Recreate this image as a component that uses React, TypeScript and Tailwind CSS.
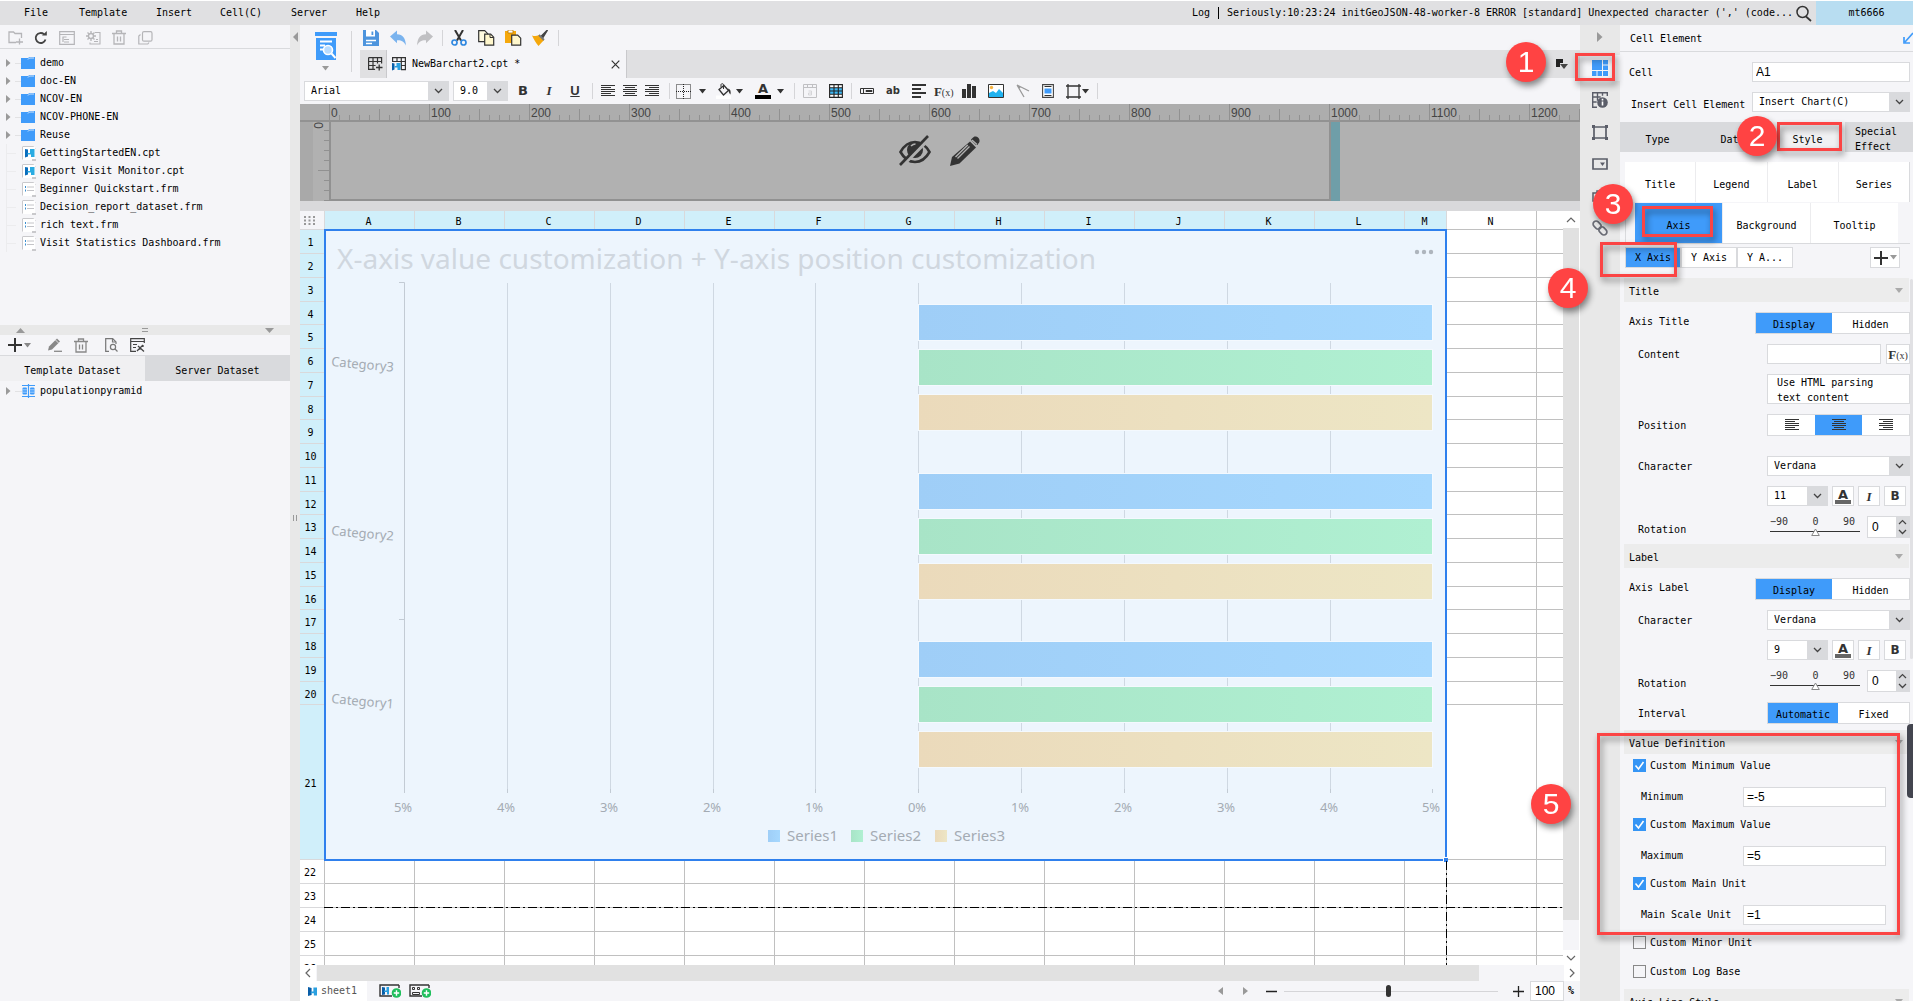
import React from "react";

const MONO = "font-['DejaVu_Sans_Mono','Liberation_Mono',monospace]";
const ARIAL = "font-['Liberation_Sans',sans-serif]";

function Ico({ w = 16, h = 16, children, className = "" }: { w?: number; h?: number; children: React.ReactNode; className?: string }) {
  return (
    <svg width={w} height={h} viewBox={`0 0 ${w} ${h}`} fill="none" className={`shrink-0 ${className}`} aria-hidden="true">
      {children}
    </svg>
  );
}

function IconButton({ label, className = "", children }: { label: string; className?: string; children: React.ReactNode }) {
  return (
    <button type="button" aria-label={label} className={`flex shrink-0 items-center justify-center ${className}`}>
      {children}
    </button>
  );
}

const Chevron = () => (
  <Ico w={9} h={6}>
    <path d="M1 1l3.500 3.500L8 1" stroke="#444" strokeWidth="1.300" />
  </Ico>
);

const Caret = ({ color = "#333" }: { color?: string }) => (
  <Ico w={7} h={5}>
    <path d="M0 0h7L3.500 4.500z" fill={color} />
  </Ico>
);

const Sep = ({ className = "h-4" }: { className?: string }) => <div className={`w-px shrink-0 bg-[#d5d5d8] ${className}`} />;

function Select({ label, value, options, className = "" }: { label: string; value: string; options: string[]; className?: string }) {
  return (
    <div className={`relative flex h-5 shrink-0 border border-[#d9dadd] bg-white ${className}`}>
      <select aria-label={label} defaultValue={value} className="w-full appearance-none bg-transparent pl-1.5 text-[10px] leading-[18px] outline-none">
        {options.map((o) => (
          <option key={o}>{o}</option>
        ))}
      </select>
      <div className="pointer-events-none absolute inset-y-0 right-0 flex w-5 items-center justify-center bg-[#d9dadd]">
        <Chevron />
      </div>
    </div>
  );
}

/* ---------- shared drawings ---------- */

const ReportGlyph = ({ w = 10, h = 10 }: { w?: number; h?: number }) => (
  <svg width={w} height={h} viewBox="0 0 10 10" className="shrink-0" aria-hidden="true">
    <path d="M0 0l4 1v8l-4 1z" fill="#0a5ea8" />
    <path d="M3 5h3v-4.500h4V9.500H6.500V7H3z" fill="#2aa0e0" />
  </svg>
);

const TrashIcon = ({ color }: { color: string }) => (
  <Ico w={14} h={15}>
    <path d="M0 3.500h14M4.500 3V1h5v2M2 4v10h10V4M5.500 6.500v5M8.500 6.500v5" stroke={color} strokeWidth="1.300" />
  </Ico>
);

const AlignIcon = ({ kind, color = "#333" }: { kind: "left" | "center" | "right"; color?: string }) => {
  const short = kind === "left" ? "M0 2.500h10M0 8.500h10" : kind === "center" ? "M2 2.500h10M2 8.500h10" : "M4 2.500h10M4 8.500h10";
  return (
    <Ico w={14} h={12}>
      <path d={`M0 .5h14M0 4.500h14M0 6.500h14M0 10.500h14 ${short}`} stroke={color} />
    </Ico>
  );
};

const FxIcon = () => (
  <span className="font-['Liberation_Serif',serif] text-[13px] leading-none font-bold text-[#333]">
    F<span className="text-[10px] font-normal">(x)</span>
  </span>
);

/* ---------- menu bar ---------- */

const MENUS: [string, string][] = [
  ["File", "w-[55px]"],
  ["Template", "w-[77px]"],
  ["Insert", "w-[64px]"],
  ["Cell(C)", "w-[71px]"],
  ["Server", "w-[65px]"],
  ["Help", "w-[40px]"],
];

function MenuBar() {
  return (
    <header className="flex h-[25px] shrink-0 items-stretch border-t border-white bg-[#e0e0e2]">
      <nav className="flex items-center pl-6">
        {MENUS.map(([m, w]) => (
          <button key={m} type="button" className={`${w} text-left`}>
            {m}
          </button>
        ))}
      </nav>
      <div className="ml-auto flex items-center">
        <button type="button">Log</button>
        <div className="mx-2 h-3 w-px bg-black" />
        <span className="whitespace-nowrap">Seriously:10:23:24 initGeoJSON-48-worker-8 ERROR [standard] Unexpected character (&#39;,&#39; (code...</span>
        <IconButton label="Search" className="mr-1 ml-0.5">
          <Ico w={17} h={17}>
            <circle cx="7.500" cy="7" r="5.500" stroke="#333" strokeWidth="1.500" />
            <path d="M11 11.500l5 4.500" stroke="#333" strokeWidth="1.700" />
          </Ico>
        </IconButton>
        <button type="button" className="h-full w-[97px] bg-[#b8ddf1] pl-1">
          mt6666
        </button>
      </div>
    </header>
  );
}

/* ---------- left column ---------- */

const FOLDERS = ["demo", "doc-EN", "NCOV-EN", "NCOV-PHONE-EN", "Reuse"];
const FILES = ["GettingStartedEN.cpt", "Report Visit Monitor.cpt", "Beginner Quickstart.frm", "Decision_report_dataset.frm", "rich text.frm", "Visit Statistics Dashboard.frm"];

const Expander = () => (
  <Ico w={5} h={8}>
    <path d="M0 0v8l4.500-4z" fill="#9a9a9a" />
  </Ico>
);

function FileIcon({ report }: { report: boolean }) {
  return (
    <Ico w={14} h={15}>
      <path d="M.5 1v12.500M.5 .5h11l2 2" stroke="#c9c9cc" />
      <path d="M1 1h12v13H1z" fill="#fff" />
      <path d="M10 13h4v2h-4z" fill="#c9c9cc" />
      {report ? (
        <>
          <path d="M3 3l3 .5v7L3 11.500z" fill="#0a6ebd" />
          <path d="M5.500 7H8V3h4.500v8H9V8.500H5.500z" fill="#29abe2" />
        </>
      ) : (
        <>
          <path d="M3.500 4v2M3.500 7.500v2" stroke="#3a8fd0" />
          <path d="M5 5h7M5 8.500h7" stroke="#c4c4c8" />
        </>
      )}
    </Ico>
  );
}

function LeftColumn() {
  return (
    <aside className="flex w-[290px] shrink-0 flex-col bg-[#f5f5f8]">
      <div className="flex h-6 shrink-0 items-center border-b border-[#d9dadd] pt-0.5 pl-2">
        <IconButton label="New folder" className="w-[26px] !justify-start">
          <Ico w={16} h={14}>
            <path d="M13.500 7V2.500H7L5.500 1H1v10.500h7" stroke="#b5b5b8" strokeWidth="1.300" />
            <path d="M8 11h7M11.500 7.500v6" stroke="#b5b5b8" strokeWidth="1.300" />
          </Ico>
        </IconButton>
        <IconButton label="Refresh" className="w-[25px] !justify-start">
          <Ico w={14} h={14}>
            <path d="M11.500 8.500A5 5 0 1 1 10 3.200" stroke="#444" strokeWidth="1.800" />
            <path d="M8 4.500h4.800V0z" fill="#444" />
          </Ico>
        </IconButton>
        <IconButton label="Templates" className="w-[27px] !justify-start">
          <Ico w={16} h={14}>
            <path d="M.7.700h14.600v12.600H.7zM.7 3.500h14.600M3.500 6h4M5 8.500h5M5 11h5M4 6v5" stroke="#b5b5b8" strokeWidth="1.200" />
          </Ico>
        </IconButton>
        <IconButton label="Template settings" className="w-[26px] !justify-start">
          <Ico w={15} h={14}>
            <circle cx="5" cy="5" r="2.500" stroke="#b5b5b8" strokeWidth="1.400" />
            <path d="M5 0v2M5 8v2M0 5h2M8 5h2M1.500 1.500l1.300 1.300M7.200 7.200l1.300 1.300M1.500 8.500l1.300-1.300M8.500 1.500L7.200 2.800" stroke="#b5b5b8" strokeWidth="1.300" />
            <path d="M9 1.500h5V13H4v-1.500M8 10.500h4M10 8.500h2" stroke="#b5b5b8" strokeWidth="1.100" />
          </Ico>
        </IconButton>
        <IconButton label="Delete" className="w-[26px] !justify-start">
          <TrashIcon color="#b5b5b8" />
        </IconButton>
        <IconButton label="Copy" className="!justify-start">
          <Ico w={15} h={14}>
            <rect x="4.500" y=".7" width="9.500" height="9.500" rx="1.500" stroke="#b5b5b8" strokeWidth="1.200" />
            <path d="M2.500 3.500L.8 5v8h9l1.200-1.500" stroke="#b5b5b8" strokeWidth="1.200" />
          </Ico>
        </IconButton>
      </div>

      <ul className="flex h-[276px] shrink-0 flex-col overflow-hidden pt-[5px]">
        {FOLDERS.map((f) => (
          <li key={f} className="flex h-[18px] items-center pl-1.5">
            <Expander />
            <div className="ml-1 h-px w-1.5 bg-[#e2e2e4]" />
            <Ico w={14} h={12}>
              <path d="M0 1h7l1.500-1H14v12H0z" fill="#3f9bfa" />
              <path d="M7 2.500L8.500 1H13" stroke="#f5f5f8" strokeWidth=".8" />
            </Ico>
            <span className="ml-[5px]">{f}</span>
          </li>
        ))}
        {FILES.map((f) => (
          <li key={f} className="flex h-[18px] items-center pl-1.5">
            <div className="h-full w-px bg-[#ececee]" />
            <div className="h-px w-[9px] bg-[#ececee]" />
            <div className="w-1.5" />
            <FileIcon report={f.endsWith("cpt")} />
            <span className="ml-1">{f}</span>
          </li>
        ))}
      </ul>

      <div className="flex h-2.5 shrink-0 items-center justify-between bg-[#e8e8e8] px-4">
        <Ico w={9} h={5}>
          <path d="M0 5h9L4.500 0z" fill="#999" />
        </Ico>
        <Ico w={6} h={4}>
          <path d="M0 .5h6M0 3.500h6" stroke="#999" />
        </Ico>
        <Ico w={9} h={5}>
          <path d="M0 0h9L4.500 5z" fill="#999" />
        </Ico>
      </div>

      <div className="flex h-[21px] shrink-0 items-center border-b border-[#d9dadd] pl-2">
        <IconButton label="Add dataset" className="gap-0.5">
          <Ico w={14} h={14}>
            <path d="M0 7h14M7 0v14" stroke="#333" strokeWidth="2" />
          </Ico>
          <Caret color="#888" />
        </IconButton>
        <Sep className="mr-2 ml-2" />
        <IconButton label="Edit dataset" className="w-[26px] !justify-start">
          <Ico w={14} h={14}>
            <path d="M0 12.500l1-4L9 .5l3 3L4 11.500z" fill="#888" />
            <path d="M7.500 2l3 3" stroke="#f5f5f8" strokeWidth=".8" />
            <path d="M6 13.300h8" stroke="#888" strokeWidth="1.300" />
          </Ico>
        </IconButton>
        <IconButton label="Delete dataset">
          <TrashIcon color="#888" />
        </IconButton>
        <Sep className="mr-2 ml-2" />
        <IconButton label="Preview dataset" className="w-[25px] !justify-start">
          <Ico w={13} h={14}>
            <path d="M4 13.300H.7V.7h7L11 4v2" stroke="#777" strokeWidth="1.200" />
            <circle cx="8" cy="9" r="2.600" stroke="#777" strokeWidth="1.200" />
            <path d="M10 11l2.500 2.500M7.500 1v3h3" stroke="#777" strokeWidth="1.200" />
          </Ico>
        </IconButton>
        <IconButton label="Dataset settings">
          <Ico w={15} h={14}>
            <path d="M6 13.300H.7V.7h13.600V5M.7 3.500h13.600M3 6.500h4M3 9.500h3" stroke="#444" strokeWidth="1.200" />
            <path d="M7 13l6-6M8 8l6 5.500M13 7v2M8.500 11h2" stroke="#444" strokeWidth="1.300" />
          </Ico>
        </IconButton>
      </div>

      <div className="flex h-[25px] shrink-0">
        <button type="button" className="flex-1 bg-[#f0f0f2] pt-1">Template Dataset</button>
        <button type="button" className="flex-1 bg-[#d9dadd] pt-1">Server Dataset</button>
      </div>
      <div className="flex h-[18px] items-center pt-0.5 pl-1.5">
        <Expander />
        <div className="ml-1 h-px w-[7px] bg-[#e2e2e4]" />
        <Ico w={13} h={14}>
          <path d="M0 1.500h13M0 12.500h13M6.500 0v14" stroke="#3f9bfa" strokeWidth="1.200" />
          <rect x=".5" y="3.500" width="4.500" height="7" rx="1" fill="#3f9bfa" />
          <rect x="8" y="3.500" width="4.500" height="7" rx="1" fill="#3f9bfa" />
          <path d="M.5 5.800H5M.5 8.200H5M8 5.800h4.500M8 8.200h4.500" stroke="#cfe5ff" strokeWidth=".7" />
        </Ico>
        <span className="ml-[5px]">populationpyramid</span>
      </div>
    </aside>
  );
}

/* ---------- top tool bars ---------- */

function TopTools() {
  return (
    <div className="flex h-[53px] shrink-0 bg-[#f5f5f8]">
      <div className="flex w-[51px] shrink-0 flex-col items-center pt-[7px]">
        <IconButton label="Preview" className="flex-col gap-1.5">
          <Ico w={22} h={28}>
            <path d="M0 0h22v4H0zM1 6h20v22H1z" fill="#3f9bfa" />
            <path d="M5 9.500h12M5 13.500h5M5 17.500h3" stroke="#fff" strokeWidth="2" />
            <circle cx="13" cy="18" r="4.500" fill="#b9dcff" stroke="#fff" strokeWidth="1.600" />
            <path d="M16.500 21.500l4 4.500" stroke="#fff" strokeWidth="2" />
          </Ico>
          <Caret color="#999" />
        </IconButton>
      </div>
      <Sep className="mt-1.5 h-[41px]" />
      <div className="flex min-w-0 flex-1 flex-col">
        <div className="flex h-[25px] shrink-0 items-center pl-[11px]">
          <IconButton label="Save" className="w-[27px] !justify-start">
            <Ico>
              <path d="M0 0h13l3 3v13H0z" fill="#4d94dd" />
              <path d="M3 0h9v6.500H3z" fill="#fff" />
              <path d="M8.500 1.500h1.800v3.500H8.500z" fill="#4d94dd" />
              <path d="M3 10.500h10M3 13.500h6" stroke="#fff" strokeWidth="1.400" />
            </Ico>
          </IconButton>
          <IconButton label="Undo" className="w-[27px] !justify-start">
            <Ico>
              <path d="M0 6.500L7 .5v3.700c6 .3 8.500 4 9 11.300-2-4-4.500-5.500-9-5.300v3z" fill="#7ab3ee" />
            </Ico>
          </IconButton>
          <IconButton label="Redo" className="w-[25px] !justify-start">
            <Ico>
              <path d="M16 6.500L9 .5v3.700C3 4.500.5 8.200 0 15.500c2-4 4.500-5.500 9-5.300v3z" fill="#c0c0c3" />
            </Ico>
          </IconButton>
          <Sep />
          <IconButton label="Cut" className="ml-2 w-[27px] !justify-start">
            <Ico>
              <path d="M4 0l6 10.500M12 0L6 10.500" stroke="#333" strokeWidth="2" />
              <circle cx="3.500" cy="12.500" r="2.500" stroke="#3088e0" strokeWidth="1.700" />
              <circle cx="12.500" cy="12.500" r="2.500" stroke="#3088e0" strokeWidth="1.700" />
            </Ico>
          </IconButton>
          <IconButton label="Copy" className="w-[27px] !justify-start">
            <Ico w={17}>
              <path d="M.7.700h6l3 3v8h-9z" fill="#fffbe0" stroke="#333" strokeWidth="1.200" />
              <path d="M6.700 4.200h6l3 3v8h-9z" fill="#fff7cc" stroke="#333" strokeWidth="1.200" />
              <path d="M12 4.500v3h3.500" stroke="#333" />
            </Ico>
          </IconButton>
          <IconButton label="Paste" className="w-[27px] !justify-start">
            <Ico w={17}>
              <path d="M0 1h11v12H0z" fill="#f5a80c" />
              <path d="M3 0h5v3H3z" fill="#fff" stroke="#b87800" strokeWidth=".8" />
              <path d="M6.700 5.200h6l3 3v7h-9z" fill="#fff7cc" stroke="#333" strokeWidth="1.200" />
            </Ico>
          </IconButton>
          <IconButton label="Format painter" className="mr-2.5 !justify-start">
            <Ico>
              <path d="M15.500 0L9 6.500l1.500 1.500z" fill="#444" stroke="#444" strokeWidth="1.500" />
              <path d="M0 5.500c3 1 5 .5 7-.5l5 5c-2 2-3 3.500-5.500 6C4 13 2 9.500 0 5.500z" fill="#f5a80c" />
              <path d="M7 5l5 5" stroke="#777" strokeWidth="1.800" />
            </Ico>
          </IconButton>
          <Sep />
        </div>
        <div className="ml-2 flex h-7 shrink-0 bg-[#e0e0e2]">
          <IconButton label="New sheet" className="w-[27px] border-r border-[#c9c9cc] pl-1">
            <Ico w={15} h={14}>
              <path d="M.6.600h13v6M.6.600v11.800h6.500M.6 4.500h13M.6 8.500h7M5 .6v11.800M9.500.600v6" stroke="#333" strokeWidth="1.200" />
              <path d="M8 10.500h6.500M11.200 7.500v6" stroke="#333" strokeWidth="1.300" />
            </Ico>
          </IconButton>
          <div className="flex w-[240px] items-center border-r border-[#c9c9cc] bg-[#f5f5f8] pl-[5px]">
            <Ico w={14} h={14}>
              <path d="M.6 5V.6h12.800v12H9M.6 4.500h12.800M9 8.500h4.500M5 .6V5M9.300.600v12" stroke="#333" strokeWidth="1.200" />
              <path d="M0 6l2.500.500v6L0 13.500z" fill="#0a5ea8" />
              <path d="M2.500 9H4.500V6h4v7H5.500v-2.500h-3z" fill="#2aa0e0" />
            </Ico>
            <span className="ml-1.5">NewBarchart2.cpt *</span>
            <IconButton label="Close" className="mr-1.5 ml-auto">
              <Ico w={9} h={9}>
                <path d="M.7.700l7.600 7.600M8.300.700L.7 8.300" stroke="#333" strokeWidth="1.200" />
              </Ico>
            </IconButton>
          </div>
          <IconButton label="Tab list" className="mr-3 ml-auto">
            <Ico w={12} h={11}>
              <path d="M0 0h7v4H4v4H0z" fill="#222" />
              <path d="M4 5h8L8 10z" fill="#444" />
            </Ico>
          </IconButton>
        </div>
      </div>
    </div>
  );
}

function FormatBar() {
  return (
    <div className="flex h-[26px] shrink-0 items-center bg-[#f5f5f8] pl-1">
      <Select label="Font family" value="Arial" options={["Arial", "Verdana"]} className="w-[145px]" />
      <Select label="Font size" value="9.0" options={["9.0", "10.0", "11.0"]} className="ml-1 w-[55px]" />
      <div className="ml-0.5 flex items-center text-[13px] text-[#333]">
        <button type="button" aria-label="Bold" className="w-[26px] font-['DejaVu_Sans',sans-serif] font-bold">B</button>
        <button type="button" aria-label="Italic" className="w-[26px] font-['Liberation_Serif',serif] font-bold italic">I</button>
        <button type="button" aria-label="Underline" className="w-[26px] font-['Liberation_Sans',sans-serif] font-bold underline">U</button>
      </div>
      <Sep className="ml-1 h-4" />
      <div className="ml-2 flex gap-2">
        <IconButton label="Align left"><AlignIcon kind="left" /></IconButton>
        <IconButton label="Align center"><AlignIcon kind="center" /></IconButton>
        <IconButton label="Align right"><AlignIcon kind="right" /></IconButton>
      </div>
      <Sep className="mr-1.5 ml-2.5 h-4" />
      <IconButton label="Borders" className="w-10 gap-2 !justify-start">
        <Ico w={15} h={15}>
          <path d="M.5.500h14v14H.5zM7.500 0v15M0 7.500h15" stroke="#222" strokeDasharray="1 1" />
        </Ico>
        <Caret />
      </IconButton>
      <IconButton label="Fill colour" className="w-[39px] gap-1 !justify-start">
        <Ico w={16} h={16}>
          <path d="M0 12.500h15V16H0z" fill="#fff" />
          <path d="M3 6.500l5-4 4.500 5-5 4.500z" stroke="#333" strokeWidth="1.300" />
          <path d="M5 4V1.500C5 .5 7.500.500 7.500 1.500V6" stroke="#333" />
          <path d="M12 5.500c2.500.5 3 2.500 2.500 6-1-1-2-2.500-2.500-6z" fill="#333" />
        </Ico>
        <Caret />
      </IconButton>
      <IconButton label="Text colour" className="w-[39px] gap-1.5 !justify-start">
        <span className="flex w-4 flex-col items-center border-b-4 border-black font-['DejaVu_Sans',sans-serif] text-[13px] leading-[12px] font-bold text-[#333]">A</span>
        <Caret />
      </IconButton>
      <Sep className="mr-2 h-4" />
      <IconButton label="Merge cells" className="w-[26px] !justify-start">
        <Ico w={14} h={14}>
          <path d="M.5.500h13v13H.5zM.5 3.500h13M4.500.500v3M9.500.500v3" stroke="#c0c0c3" />
          <path d="M5.500 7h3v4h-3V9h3" stroke="#d5d5d8" />
        </Ico>
      </IconButton>
      <IconButton label="Conditional grid" className="mr-2">
        <Ico w={14} h={14}>
          <path d="M.5.500h13v13H.5z" fill="#fff" />
          <path d="M1 4h12v6H1z" fill="#3fb8f5" />
          <path d="M.6.600h12.800v12.800H.6zM.6 3.800h12.800M.6 7h12.800M.6 10.200h12.800M5 .6v12.800M9.300.600v12.800" stroke="#222" strokeWidth="1.100" />
        </Ico>
      </IconButton>
      <Sep className="mr-2 h-4" />
      <div className="flex items-center gap-3">
        <IconButton label="Text field">
          <Ico w={14} h={6}>
            <path d="M.5.500h13v5H.5zM3.500 1v4M6 2.500h6v1H6z" stroke="#333" />
          </Ico>
        </IconButton>
        <IconButton label="Plain text"><span className="font-['DejaVu_Sans',sans-serif] text-[10px] font-bold text-[#333]">ab</span></IconButton>
        <IconButton label="Rich text">
          <Ico w={14} h={14}>
            <path d="M0 1h14M0 5h9M0 9h14M0 13h9" stroke="#333" strokeWidth="1.800" />
          </Ico>
        </IconButton>
        <IconButton label="Formula" className="-mx-1"><FxIcon /></IconButton>
        <IconButton label="Chart">
          <Ico w={14} h={14}>
            <path d="M0 5h4v9H0zM5 0h4v14H5zM10 2h4v12h-4z" fill="#333" />
          </Ico>
        </IconButton>
        <IconButton label="Image">
          <Ico w={16} h={14}>
            <path d="M.5.500h15v13H.5z" fill="#fff" stroke="#333" />
            <path d="M1 13V9l4-2 3 2 3-4 4 4v4z" fill="#1fb2f0" />
            <circle cx="3.500" cy="3.500" r="1.700" fill="#f5b342" />
          </Ico>
        </IconButton>
        <IconButton label="Slope line">
          <Ico w={14} h={14}>
            <path d="M1 1l12 6M1 1l7 12M1 1l3 3" stroke="#999" strokeWidth="1.300" />
          </Ico>
        </IconButton>
        <IconButton label="Sub report">
          <Ico w={12} h={14}>
            <path d="M.6.600h10.800v12.800H.6z" fill="#fff" stroke="#444" strokeWidth="1.100" />
            <path d="M2.500 2.500h7M2.500 11.500h7" stroke="#333" />
            <path d="M2.500 4.500h7v5h-7z" fill="#3f9bfa" />
          </Ico>
        </IconButton>
        <IconButton label="Widget" className="gap-px">
          <Ico w={15} h={15}>
            <path d="M2 0v15M13 0v15M0 2h15M0 13h15" stroke="#333" strokeWidth="1.300" />
          </Ico>
          <Caret />
        </IconButton>
      </div>
      <Sep className="ml-2 h-4" />
    </div>
  );
}

/* ---------- ruler and hidden parameter panel ---------- */

const RULER = [0, 100, 200, 300, 400, 500, 600, 700, 800, 900, 1000, 1100, 1200];

function ParameterPanel() {
  return (
    <div className="flex h-[97px] shrink-0 flex-col bg-[#b1b1b1]">
      <div className="flex h-[18px] shrink-0 overflow-hidden border-b-2 border-[#929292] bg-[#adadad]">
        <div className="w-[29px] shrink-0" />
        {RULER.map((n) => (
          <div key={n} className="relative w-[100px] shrink-0">
            <svg width="100" height="16" viewBox="0 0 100 16" className="absolute inset-0" aria-hidden="true">
              <path
                d="M.5 0v16M50.500 5v11M10.500 11v5M20.500 11v5M30.500 11v5M40.500 11v5M60.500 11v5M70.500 11v5M80.500 11v5M90.500 11v5"
                stroke="#919191"
              />
            </svg>
            <span className={`relative pl-0.5 text-[12px] leading-[18px] text-[#444] ${ARIAL}`}>{n}</span>
          </div>
        ))}
      </div>
      <div className="flex min-h-0 flex-1">
        <div className="w-[13px] shrink-0 bg-[#a9a9a9]" />
        <div className="relative w-4 shrink-0">
          <svg width="16" height="79" viewBox="0 0 16 79" className="absolute inset-0" aria-hidden="true">
            <path d="M11 8.500h5M11 18.500h5M11 28.500h5M11 38.500h5M5 48.500h11M11 58.500h5M11 68.500h5M11 78.500h5" stroke="#919191" />
          </svg>
          <span className={`block size-3 rotate-270 text-right text-[12px] leading-3 text-[#444] ${ARIAL}`}>0</span>
        </div>
        <div className="flex w-[1002px] shrink-0 items-center border-r-2 border-b-2 border-l-2 border-[#919191]">
          <div className="ml-[568px] flex items-center gap-[19px] pb-5">
            <IconButton label="Hide panel">
              <Ico w={32} h={31}>
                <path d="M1.500 17C6 9 11 7 16 7s10 2 14.500 10C26 25 21 27 16 27S6 25 1.500 17z" stroke="#333" strokeWidth="2.600" />
                <circle cx="16" cy="15" r="8" fill="#333" />
                <path d="M12 11c1.500-1.500 3-2 4.500-2" stroke="#b1b1b1" strokeWidth="1.500" />
                <path d="M3 31L32 2" stroke="#b1b1b1" strokeWidth="3.500" />
                <path d="M1 30L29 1" stroke="#333" strokeWidth="2.600" />
              </Ico>
            </IconButton>
            <IconButton label="Edit panel">
              <Ico w={30} h={30}>
                <path d="M21.500 4.500l4.500 4.500 1.500 0 .8-1.500C31 5 29 1 26 .5c-1.500-.3-2.500.3-3.500 1.500L21 3.500z" fill="#333" />
                <path d="M22 4l5 4.500" stroke="#b1b1b1" strokeWidth="1.200" />
                <path d="M20 5.500l6 6L9.500 27.500 0 30l2-9z" fill="#333" />
                <path d="M19.500 10.500L7.500 22.500M17.800 9L5.500 21" stroke="#b1b1b1" strokeWidth="1.400" />
              </Ico>
            </IconButton>
          </div>
        </div>
        <div className="w-[9px] shrink-0 bg-[#6f9ea8]" />
      </div>
    </div>
  );
}

/* ---------- chart ---------- */

const AXIS_X = [78, 181, 284, 387, 489, 592, 695, 798, 901, 1004, 1106];
const AXIS_LABELS = ["5%", "4%", "3%", "2%", "1%", "0%", "1%", "2%", "3%", "4%", "5%"];
const GROUP_Y = [74, 243, 411];
const CATEGORIES = ["Category3", "Category2", "Category1"];
const SERIES = [
  ["Series1", "url(#blue)"],
  ["Series2", "url(#green)"],
  ["Series3", "url(#sand)"],
];
const LEGEND_X = [442, 525, 609];

function Chart() {
  return (
    <svg viewBox="0 0 1119 628" width="1119" height="628" className="block font-['Noto_Sans',sans-serif]" role="img" aria-label="Grouped bar chart">
      <defs>
        <linearGradient id="blue"><stop offset="0" stopColor="#9fcef7" /><stop offset="1" stopColor="#a6d8fe" /></linearGradient>
        <linearGradient id="green"><stop offset="0" stopColor="#a8e4c7" /><stop offset="1" stopColor="#b0f0d2" /></linearGradient>
        <linearGradient id="sand"><stop offset="0" stopColor="#ebdabb" /><stop offset="1" stopColor="#ede6c5" /></linearGradient>
      </defs>
      <text x="11" y="38" fontSize="28" fill="#d0d7df">X-axis value customization + Y-axis position customization</text>
      {[1091, 1098, 1105].map((x) => (
        <circle key={x} cx={x} cy="21" r="2.200" fill="#aeb5bd" />
      ))}
      {AXIS_X.slice(0, 10).map((x) => (
        <path key={x} d={`M${x + 0.5} 52V558`} stroke="#cfd8e2" />
      ))}
      {AXIS_X.map((x) => (
        <path key={x} d={`M${x + 0.5} 558v4`} stroke="#c3cbd4" />
      ))}
      <path d="M73 51.500h5.500V562M73 388.500h5" stroke="#c3cbd4" fill="none" />
      {GROUP_Y.map((y, g) => (
        <g key={y}>
          {SERIES.map(([name, fill], i) => (
            <rect key={name} x="592.500" y={y + i * 45 - 0.5} width="514" height="36" fill={fill} stroke="#f4f9fe" />
          ))}
          <text x="68" y={y + 64} fontSize="13" fill="#a4abb3" textAnchor="end" transform={`rotate(5 38 ${y + 60})`}>{CATEGORIES[g]}</text>
        </g>
      ))}
      {AXIS_X.map((x, i) => (
        <text key={x} x={x - 1} y="581" fontSize="13" fill="#a4abb3" textAnchor="middle">{AXIS_LABELS[i]}</text>
      ))}
      {SERIES.map(([name, fill], i) => (
        <g key={name}>
          <rect x={LEGEND_X[i]} y="599" width="12" height="12" fill={fill} />
          <text x={LEGEND_X[i] + 19} y="610" fontSize="15" fill="#a4abb3">{name}</text>
        </g>
      ))}
    </svg>
  );
}

/* ---------- spreadsheet ---------- */

const COLS = ["A", "B", "C", "D", "E", "F", "G", "H", "I", "J", "K", "L", "M", "N", ""];
const rowHeight = (r: number) => (r === 21 ? "h-[155px]" : r > 21 ? "h-6" : r % 4 === 0 ? "h-[23px]" : "h-6");
const ROWS = Array.from({ length: 26 }, (_, i) => i + 1);

const ScrollArrow = ({ d, label, className }: { d: string; label: string; className: string }) => (
  <IconButton label={label} className={`bg-white ${className}`}>
    <Ico w={10} h={10}>
      <path d={d} stroke="#666" strokeWidth="1.200" />
    </Ico>
  </IconButton>
);

function Sheet() {
  return (
    <div className="flex min-h-0 flex-1">
      <div className="relative min-w-0 flex-1 overflow-hidden bg-white">
        <table className="w-[1327px] table-fixed border-separate border-spacing-0">
          <colgroup>
            <col className="w-[25px]" />
            {COLS.map((c, i) => (
              <col key={i} className={c === "M" ? "w-[42px]" : "w-[90px]"} />
            ))}
          </colgroup>
          <thead>
            <tr className="h-[19px]">
              <th className="border-r border-b border-[#d9d9db] bg-[#f5f5f8] p-0">
                <Ico w={11} h={9} className="mr-auto ml-1">
                  <path d="M0 1h2M4.500 1h2M9 1h2M0 4.500h2M4.500 4.500h2M9 4.500h2M0 8h2M4.500 8h2M9 8h2" stroke="#999" strokeWidth="2" />
                </Ico>
              </th>
              {COLS.map((c, i) => (
                <th key={i} scope="col" className={`border-r border-b p-0 pt-1 pr-0.5 font-normal ${i < 13 ? "border-[#d9d9db] bg-[#d0effa]" : "border-[#c0c0c0] bg-white"}`}>
                  {c}
                </th>
              ))}
            </tr>
          </thead>
          <tbody>
            {ROWS.map((r) => (
              <tr key={r} className={rowHeight(r)}>
                <th scope="row" className={`border-b border-[#d9d9db] p-0 pt-[3px] pr-1 font-normal ${r < 22 ? "bg-[#d0effa]" : "border-r border-r-[#c0c0c0] bg-white"}`}>
                  {r}
                </th>
                {COLS.map((c, i) => (
                  <td key={i} className="border-r border-b border-[#c0c0c0] p-0" />
                ))}
              </tr>
            ))}
          </tbody>
        </table>
        <div className="absolute top-[18px] left-6 border-2 border-[#2f80ed] bg-[#edf5fd]">
          <Chart />
          <div className="absolute -right-[3px] -bottom-[3px] size-[5px] border-t border-l border-white bg-[#2f80ed]" />
        </div>
        <svg className="pointer-events-none absolute top-[650px] left-[1146px]" width="1" height="106" aria-hidden="true">
          <path d="M.5 0v106" stroke="#000" strokeDasharray="9 3 2 3" />
        </svg>
        <svg className="pointer-events-none absolute top-[696px] left-6 w-full" height="1" aria-hidden="true">
          <path d="M0 .5h3000" stroke="#000" strokeDasharray="9 3 2 3" />
        </svg>
      </div>
      <div className="flex w-[17px] shrink-0 flex-col border-r border-white bg-[#f5f5f8]">
        <ScrollArrow label="Scroll up" d="M1 7l4-4 4 4" className="h-[17px]" />
        <div className="h-[692px] bg-[#e1e1e1]" />
        <ScrollArrow label="Scroll down" d="M1 3l4 4 4-4" className="mt-auto h-[15px]" />
      </div>
    </div>
  );
}

function BottomBar() {
  return (
    <>
      <div className="flex h-4 shrink-0 bg-[#f5f5f8]">
        <ScrollArrow label="Scroll left" d="M7 1L3 5l4 4" className="w-4" />
        <div className="ml-px h-full w-[1162px] bg-[#e1e1e1]" />
        <ScrollArrow label="Scroll right" d="M3 1l4 4-4 4" className="ml-auto w-4" />
      </div>
      <div className="flex h-5 shrink-0 items-center bg-[#f5f5f8]">
        <button type="button" className="flex h-full w-[67px] items-center gap-1 bg-white pl-2 text-[#555]">
          <ReportGlyph w={9} h={9} />
          sheet1
        </button>
        <IconButton label="Add report sheet" className="ml-3">
          <Ico w={22} h={14}>
            <path d="M20 1H1v11h12M20 1v3" stroke="#333" strokeWidth="1.400" />
            <path d="M3 3l3 .5v7L3 11z" fill="#0a5ea8" />
            <path d="M5 6.500h2.500V3H10v7.500H8V8H5z" fill="#2aa0e0" />
            <circle cx="17.500" cy="9" r="4.800" fill="#1fbf5c" />
            <path d="M14.800 9h5.400M17.500 6.300v5.400" stroke="#fff" strokeWidth="1.400" />
          </Ico>
        </IconButton>
        <IconButton label="Add form sheet" className="ml-2">
          <Ico w={22} h={14}>
            <path d="M20 1H1v11h12M20 1v3" stroke="#333" strokeWidth="1.400" />
            <path d="M3.500 3.500h2v2h-2zM8.500 3.500h2v2h-2zM3.500 8.500h7v2h-7z" stroke="#333" />
            <circle cx="17.500" cy="9" r="4.800" fill="#1fbf5c" />
            <path d="M14.800 9h5.400M17.500 6.300v5.400" stroke="#fff" strokeWidth="1.400" />
          </Ico>
        </IconButton>
        <div className="ml-auto flex items-center">
          <IconButton label="Previous sheet" className="mr-5">
            <Ico w={5} h={8}><path d="M5 0v8L0 4z" fill="#999" /></Ico>
          </IconButton>
          <IconButton label="Next sheet" className="mr-[18px]">
            <Ico w={5} h={8}><path d="M0 0v8l5-4z" fill="#999" /></Ico>
          </IconButton>
          <IconButton label="Zoom out">
            <Ico w={11} h={11}><path d="M0 5.500h11" stroke="#222" strokeWidth="1.500" /></Ico>
          </IconButton>
          <input
            type="range"
            aria-label="Zoom"
            defaultValue={49}
            className="mx-[7px] h-3 w-[214px] appearance-none bg-[linear-gradient(#d5d5d8,#d5d5d8)] bg-[length:100%_1px] bg-center bg-no-repeat [&::-webkit-slider-thumb]:h-3 [&::-webkit-slider-thumb]:w-[5px] [&::-webkit-slider-thumb]:appearance-none [&::-webkit-slider-thumb]:rounded-sm [&::-webkit-slider-thumb]:bg-[#333]"
          />
          <IconButton label="Zoom in" className="ml-2">
            <Ico w={11} h={11}><path d="M0 5.500h11M5.500 0v11" stroke="#222" strokeWidth="1.300" /></Ico>
          </IconButton>
          <input aria-label="Zoom percent" defaultValue="100" className={`ml-1.5 h-5 w-[34px] border border-[#d9dadd] bg-white pl-1 text-[12px] ${ARIAL}`} />
          <span className="ml-1 w-3 font-bold">%</span>
        </div>
      </div>
    </>
  );
}

/* ---------- right side ---------- */

function SideStrip() {
  return (
    <div className="flex w-10 shrink-0 flex-col items-center bg-[#e8e8e8]">
      <IconButton label="Collapse panel" className="h-6 w-full">
        <Ico w={6} h={10}><path d="M0 0v10l5.500-5z" fill="#999" /></Ico>
      </IconButton>
      <IconButton label="Cell element" className="mt-1.5 h-[26px] w-full bg-[#f5f5f8]">
        <Ico w={16} h={16}>
          <path d="M0 0h10v10H0zM11 0h5v4.500h-5zM11 5.500h5V10h-5zM0 11h4.500v5H0zM5.500 11H10v5H5.500zM11 11h5v5h-5z" fill="#3f9bfa" />
        </Ico>
      </IconButton>
      <IconButton label="Cell attributes" className="mt-1.5 h-[26px] w-full">
        <Ico w={16} h={16}>
          <path d="M15.300 4V.7H.7v14.600H5M.7 5h8M5.500.700v8M10.500.700v3M.7 10h4" stroke="#5a5d68" strokeWidth="1.400" />
          <circle cx="10.500" cy="10.500" r="5.300" fill="#5a5d68" />
          <path d="M10.500 9.500v4M10.500 6.800v1.600" stroke="#fff" strokeWidth="1.600" />
        </Ico>
      </IconButton>
      <IconButton label="Floating element" className="mt-1.5 h-[26px] w-full">
        <Ico w={16} h={15}>
          <path d="M2 1v13M14 1v13M1 2h14M1 13h14" stroke="#5a5d68" strokeWidth="1.700" />
          <path d="M0 0h3v3H0zM13 0h3v3h-3zM0 12h3v3H0zM13 12h3v3h-3z" fill="#5a5d68" />
        </Ico>
      </IconButton>
      <IconButton label="Widget settings" className="mt-1.5 h-[26px] w-full">
        <Ico w={16} h={12}>
          <path d="M1 1h14v10H1z" stroke="#5a5d68" strokeWidth="1.700" />
          <path d="M8 4.500h5L10.500 8z" fill="#5a5d68" />
        </Ico>
      </IconButton>
      <IconButton label="Condition attributes" className="mt-1.5 h-[26px] w-full">
        <Ico w={16} h={12}>
          <path d="M5 1h10v8H5zM5 3H1v8h10V9" stroke="#5a5d68" strokeWidth="1.500" />
        </Ico>
      </IconButton>
      <IconButton label="Hyperlink" className="mt-1.5 h-[26px] w-full">
        <Ico w={16} h={16}>
          <g stroke="#6a6c75" strokeWidth="1.700">
            <rect x="-3" y="-5" width="6" height="9" rx="3" transform="translate(5.500 5.500) rotate(-45)" />
            <rect x="-3" y="-4" width="6" height="9" rx="3" transform="translate(10.500 10.500) rotate(-45)" />
          </g>
        </Ico>
      </IconButton>
    </div>
  );
}

function SectionHeader({ title }: { title: string }) {
  return (
    <button type="button" className="ml-1 flex h-6 w-[285px] shrink-0 items-center justify-between bg-[#ececec] pt-1 pr-1.5 pl-[5px]">
      {title}
      <Ico w={8} h={5} className="-mt-1"><path d="M0 0h8L4 5z" fill="#aaa" /></Ico>
    </button>
  );
}

function Toggle({ on, off, className, onWidth }: { on: string; off: string; className: string; onWidth: string }) {
  return (
    <div className={`ml-auto flex h-[22px] shrink-0 border border-[#d9dadd] bg-white ${className}`}>
      <button type="button" aria-pressed="true" className={`bg-[#3f9bfa] pt-1 ${onWidth}`}>{on}</button>
      <button type="button" aria-pressed="false" className="flex-1 pt-1">{off}</button>
    </div>
  );
}

const Row = ({ label, indent = true, h = "h-5", pad = "pt-0.5", children }: { label?: string; indent?: boolean; h?: string; pad?: string; children: React.ReactNode }) => (
  <div className={`flex w-[290px] shrink-0 items-center ${h}`}>
    <span className={`${pad} ${indent ? "pl-[18px]" : "pl-[9px]"}`}>{label}</span>
    {children}
  </div>
);

function FontRow({ size }: { size: string }) {
  const b = "h-5 w-[22px] border border-[#d9dadd] bg-white text-[#333]";
  return (
    <Row>
      <div className="ml-auto flex gap-1 pr-1">
        <Select label="Font size" value={size} options={["9", "10", "11"]} className="w-[61px]" />
        <IconButton label="Text colour" className={b}>
          <span className="flex w-4 flex-col items-center border-b-4 border-[#666] font-['DejaVu_Sans',sans-serif] text-[13px] leading-[11px] font-bold">A</span>
        </IconButton>
        <IconButton label="Italic" className={b}>
          <span className="font-['Liberation_Serif',serif] text-[13px] leading-none font-bold italic">I</span>
        </IconButton>
        <IconButton label="Bold" className={b}>
          <span className="font-['DejaVu_Sans',sans-serif] text-[12px] leading-none font-bold">B</span>
        </IconButton>
      </div>
    </Row>
  );
}

function RotationRow() {
  return (
    <Row label="Rotation" h="h-[22px]" pad="pt-1.5">
      <div className="ml-auto flex h-full">
        <div className="relative mr-1.5 w-[91px]">
          <div className="flex justify-between pr-1.5 text-[10px] leading-[12px] text-[#333]">
            <span>−90</span>
            <span>0</span>
            <span>90</span>
          </div>
          <input
            type="range"
            aria-label="Rotation angle"
            min={-90}
            max={90}
            defaultValue={0}
            className="absolute top-[11px] left-0 h-2 w-[90px] appearance-none bg-[linear-gradient(#333,#333)] bg-[length:100%_1px] bg-center bg-no-repeat [&::-webkit-slider-thumb]:size-0 [&::-webkit-slider-thumb]:appearance-none"
          />
          <Ico w={9} h={8} className="pointer-events-none absolute top-3 left-[41px]">
            <path d="M4.500 1L8.300 7.500H.7z" fill="#fff" stroke="#888" />
          </Ico>
        </div>
        <div className="flex h-[22px] w-[43px] border border-[#d9dadd] bg-white">
          <input aria-label="Rotation" defaultValue="0" className={`w-[28px] pl-1 text-[12px] outline-none ${ARIAL}`} />
          <div className="flex flex-1 flex-col items-center justify-around bg-[#d9dadd]">
            <IconButton label="Increase"><Ico w={9} h={6}><path d="M1 5l3.500-3.500L8 5" stroke="#444" strokeWidth="1.200" /></Ico></IconButton>
            <IconButton label="Decrease"><Chevron /></IconButton>
          </div>
        </div>
      </div>
    </Row>
  );
}

function Check({ label, checked = false, className }: { label: string; checked?: boolean; className: string }) {
  return (
    <label className={`flex h-[13px] shrink-0 items-center pl-[13px] ${className}`}>
      <span className="relative flex size-[13px]">
        <input type="checkbox" defaultChecked={checked} className="peer size-[13px] appearance-none border border-[#888] bg-[#f5f5f8] checked:border-[#3595f5] checked:bg-[#3595f5]" />
        <Ico w={13} h={13} className="pointer-events-none absolute inset-0 hidden peer-checked:block">
          <path d="M2.500 6.500l3 3.500 5-7" stroke="#fff" strokeWidth="1.600" />
        </Ico>
      </span>
      <span className="ml-1">{label}</span>
    </label>
  );
}

function ValueRow({ id, label, value }: { id: string; label: string; value: string }) {
  return (
    <div className="mt-[15px] flex h-5 shrink-0 items-center">
      <label htmlFor={id} className="w-[123px] pl-[21px]">{label}</label>
      <input id={id} defaultValue={value} className={`h-5 w-[143px] border border-[#d9dadd] bg-white pl-[3px] text-[12px] ${ARIAL}`} />
    </div>
  );
}

function PropertiesPanel() {
  const tab = "w-[75px] shrink-0 px-2";
  const cell = "flex-1 border-l border-[#ececee] bg-white pt-1.5 first:border-l-0";
  return (
    <section className="relative flex min-w-0 flex-1 flex-col overflow-hidden bg-[#f5f5f8]">
      <div className="flex h-[27px] shrink-0 items-center justify-between border-b border-[#d9dadd] pl-2.5">
        <h2 className="pt-0.5">Cell Element</h2>
        <IconButton label="Pop out">
          <Ico w={10} h={12}><path d="M10 1L2 10M1 5v6h6" stroke="#3f9bfa" strokeWidth="1.700" /></Ico>
        </IconButton>
      </div>
      <div className="flex h-10 shrink-0 items-center pl-[9px]">
        <label htmlFor="cell" className="w-[123px] pt-0.5">Cell</label>
        <input id="cell" defaultValue="A1" className={`h-5 w-[158px] border border-[#d9dadd] bg-white pl-[3px] text-[12px] ${ARIAL}`} />
      </div>
      <div className="flex h-5 shrink-0 items-center pl-[11px]">
        <span className="w-[121px] pt-1.5">Insert Cell Element</span>
        <Select label="Insert Cell Element" value="Insert Chart(C)" options={["Insert Chart(C)"]} className="w-[158px]" />
      </div>

      <div role="tablist" className="mt-2.5 flex h-[30px] w-[300px] shrink-0 bg-[#d9dadd]">
        <button type="button" role="tab" className={`${tab} pt-1.5`}>Type</button>
        <button type="button" role="tab" className={`${tab} pt-1.5`}>Data</button>
        <button type="button" role="tab" aria-selected="true" className={`${tab} bg-[#f0f0f2] pt-1.5`}>Style</button>
        <button type="button" role="tab" className={`${tab} px-[10px] pt-0.5 text-left leading-[15px]`}>Special Effect</button>
      </div>

      <div className="mt-2.5 ml-[5px] flex h-10 w-[285px] shrink-0 border-r border-[#d9dadd]">
        {["Title", "Legend", "Label", "Series"].map((t) => (
          <button key={t} type="button" className={cell}>{t}</button>
        ))}
      </div>
      <div className="mt-px ml-[5px] flex h-[41px] w-[285px] shrink-0 border-b border-l border-[#d9dadd] pr-3 pl-[9px]">
        {["Axis", "Background", "Tooltip"].map((t) => (
          <button key={t} type="button" className={t === "Axis" ? "flex-1 bg-[#3f9bfa] pt-1.5" : cell}>{t}</button>
        ))}
      </div>
      <div className="mt-[3px] ml-[5px] flex h-[21px] w-[275px] shrink-0">
        <button type="button" className="w-14 border border-[#d9dadd] bg-[#3f9bfa]">X Axis</button>
        <button type="button" className="w-14 border border-[#d9dadd] bg-white">Y Axis</button>
        <button type="button" className="w-14 border border-[#d9dadd] bg-white">Y A...</button>
        <IconButton label="Add axis" className="ml-auto w-[30px] gap-0.5 border border-[#d9dadd] bg-white">
          <Ico w={14} h={14}><path d="M0 7h14M7 0v14" stroke="#333" strokeWidth="2" /></Ico>
          <Caret color="#999" />
        </IconButton>
      </div>

      <div className="mt-2.5 flex shrink-0 flex-col">
        <SectionHeader title="Title" />
        <div className="flex flex-col gap-2.5 pt-2.5 pb-1.5">
          <Row label="Axis Title" indent={false} h="h-[22px]" pad="pb-0.5">
            <Toggle on="Display" off="Hidden" className="w-[155px]" onWidth="w-[76px]" />
          </Row>
          <Row label="Content">
            <input aria-label="Content" className="mr-[5px] ml-auto h-5 w-[114px] border border-[#d9dadd] bg-white" />
            <IconButton label="Formula" className="h-5 w-6 border border-[#d9dadd] bg-white"><FxIcon /></IconButton>
          </Row>
          <Row h="h-[30px]">
            <button type="button" className="ml-auto h-[30px] w-[143px] border border-[#d9dadd] bg-white pr-5 pl-[9px] text-left leading-[15px]">Use HTML parsing text content</button>
          </Row>
          <Row label="Position" h="h-[22px]">
            <div className="ml-auto flex h-[22px] w-[143px] border border-[#d9dadd] bg-white">
              <IconButton label="Left" className="flex-1"><AlignIcon kind="left" /></IconButton>
              <IconButton label="Center" className="flex-1 bg-[#3f9bfa]"><AlignIcon kind="center" /></IconButton>
              <IconButton label="Right" className="flex-1"><AlignIcon kind="right" /></IconButton>
            </div>
          </Row>
          <div />
          <Row label="Character">
            <Select label="Title font" value="Verdana" options={["Verdana", "Arial"]} className="ml-auto w-[143px]" />
          </Row>
          <FontRow size="11" />
          <RotationRow />
        </div>
        <SectionHeader title="Label" />
        <div className="flex flex-col gap-2.5 pt-2.5 pb-1.5">
          <Row label="Axis Label" indent={false} h="h-[22px]" pad="pb-0.5">
            <Toggle on="Display" off="Hidden" className="w-[155px]" onWidth="w-[76px]" />
          </Row>
          <Row label="Character">
            <Select label="Label font" value="Verdana" options={["Verdana", "Arial"]} className="ml-auto w-[143px]" />
          </Row>
          <FontRow size="9" />
          <RotationRow />
          <Row label="Interval" h="h-[22px]">
            <Toggle on="Automatic" off="Fixed" className="w-[143px]" onWidth="w-[70px]" />
          </Row>
        </div>
        <SectionHeader title="Value Definition" />
        <Check label="Custom Minimum Value" checked className="mt-[5px]" />
        <ValueRow id="minimum" label="Minimum" value="=-5" />
        <Check label="Custom Maximum Value" checked className="mt-[11px]" />
        <ValueRow id="maximum" label="Maximum" value="=5" />
        <Check label="Custom Main Unit" checked className="mt-[11px]" />
        <ValueRow id="unit" label="Main Scale Unit" value="=1" />
        <Check label="Custom Minor Unit" className="mt-[11px]" />
        <Check label="Custom Log Base" className="mt-4 mb-[11px]" />
        <SectionHeader title="Axis Line Style" />
      </div>
      <div className="absolute top-[254px] right-0 h-[380px] w-[3px] rounded bg-[#e1e1e4]" />
      <div className="absolute top-[699px] right-0 h-[74px] w-1.5 rounded-l bg-[#43454f]" />
    </section>
  );
}

const SHADOW = "drop-shadow-[2px_4px_3px_rgba(0,0,0,0.45)]";
const BOXES = [
  "-left-[5px] top-[28px] h-[28px] w-[40px]",
  "left-[197px] top-[97px] h-[29px] w-[65px]",
  "left-[62px] top-[181px] h-[31px] w-[71px]",
  "left-[20px] top-[217px] h-[35px] w-[77px]",
  "left-[17px] top-[708px] h-[202px] w-[303px]",
];
const PINS = [
  "-left-[74px] top-[17px]",
  "left-[157px] top-[91px]",
  "left-[13px] top-[159px]",
  "-left-[32px] top-[243px]",
  "-left-[49px] top-[759px]",
];

function Callouts() {
  return (
    <div className="pointer-events-none absolute inset-0">
      {BOXES.map((b) => (
        <div key={b} className={`absolute border-[3px] border-[#fb4444] ${SHADOW} ${b}`} />
      ))}
      {PINS.map((p, i) => (
        <div key={p} className={`absolute flex size-10 items-center justify-center rounded-full bg-[#ff4343] text-[30px] leading-none text-white ${ARIAL} ${SHADOW} ${p}`}>
          {i + 1}
        </div>
      ))}
    </div>
  );
}

export default function App() {
  return (
    <div className={`flex h-screen flex-col overflow-hidden bg-[#f5f5f8] text-[10px] leading-[14px] text-black ${MONO}`}>
      <MenuBar />
      <div className="flex min-h-0 flex-1">
        <LeftColumn />
        <div className="relative flex w-2.5 shrink-0 flex-col items-center bg-[#e8e8e8] pt-[7px]">
          <Ico w={5} h={10}><path d="M5 0v10L0 5z" fill="#999" /></Ico>
          <Ico w={4} h={6} className="mt-[473px]"><path d="M.5 0v6M3.500 0v6" stroke="#999" /></Ico>
        </div>
        <main className="flex min-w-0 flex-1 flex-col">
          <TopTools />
          <FormatBar />
          <ParameterPanel />
          <div className="h-2.5 shrink-0 bg-[#d9d9db]" />
          <Sheet />
          <BottomBar />
        </main>
        <div className="relative flex w-[333px] shrink-0">
          <SideStrip />
          <PropertiesPanel />
          <Callouts />
        </div>
      </div>
    </div>
  );
}
